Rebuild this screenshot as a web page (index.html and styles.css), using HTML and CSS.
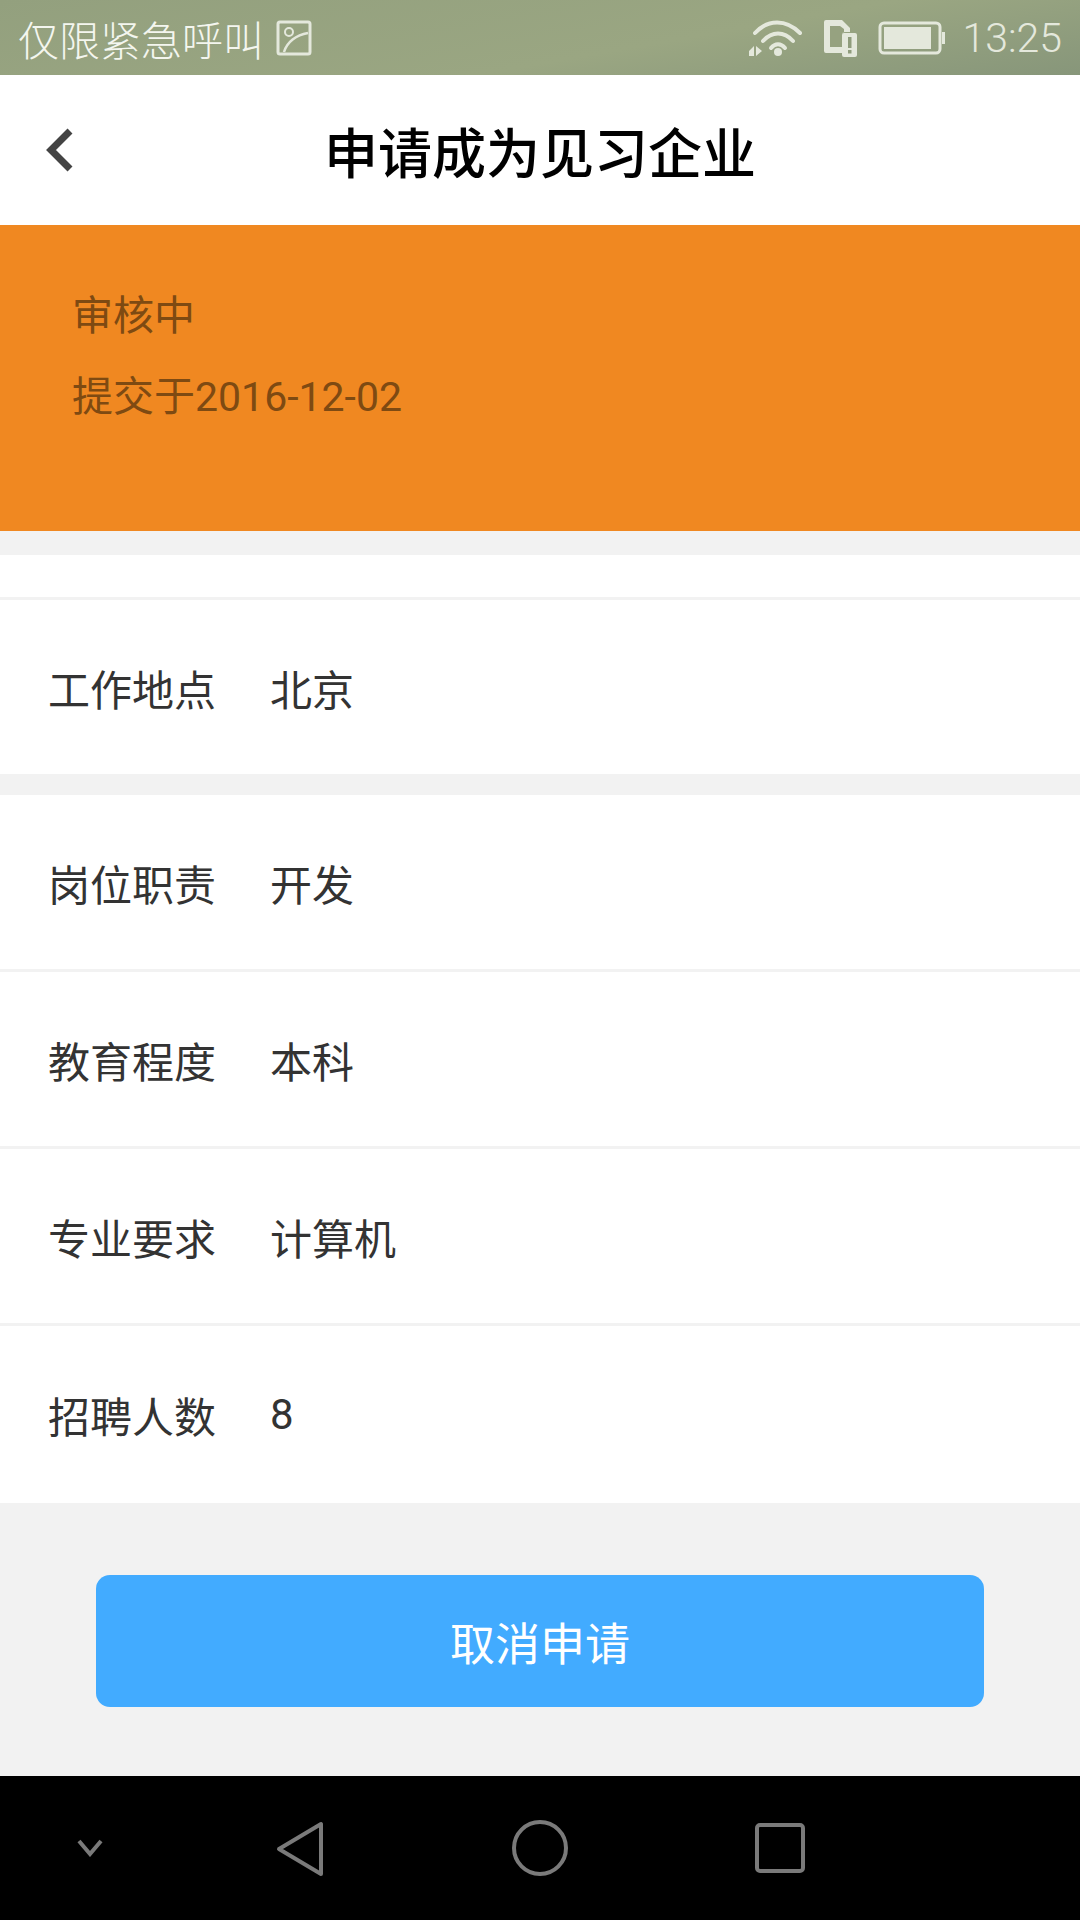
FILE: index.html
```html
<!DOCTYPE html>
<html lang="zh-CN">
<head>
  <meta charset="UTF-8">
  <meta name="viewport" content="width=device-width, initial-scale=1.0">
  <title>申请成为见习企业</title>
  <link rel="stylesheet" href="styles.css">
</head>
<body>
  <div class="phone">
    <div class="status-bar">
      <div class="status-left">
        <span class="carrier">仅限紧急呼叫</span>
        <svg class="pic-icon" width="36" height="36" viewBox="0 0 36 36">
          <rect x="2" y="2" width="32" height="32" rx="2" fill="none" stroke="#e4e8dc" stroke-width="3"/>
          <circle cx="13" cy="12" r="4" fill="none" stroke="#e4e8dc" stroke-width="2"/>
          <path d="M8 32C11 22 20 15 32 13" fill="none" stroke="#e4e8dc" stroke-width="2.5"/>
        </svg>
      </div>
      <div class="status-right">
        <svg class="wifi" width="56" height="38" viewBox="0 0 56 38">
          <path d="M7 14C20 0 38 0 52 14" fill="none" stroke="#e4e8dc" stroke-width="4" stroke-linecap="round"/>
          <path d="M15 22C24 12 36 12 45 22" fill="none" stroke="#e4e8dc" stroke-width="4" stroke-linecap="round"/>
          <path d="M23 29C27 24 33 24 37 29" fill="none" stroke="#e4e8dc" stroke-width="4" stroke-linecap="round"/>
          <circle cx="30" cy="33" r="4" fill="#e4e8dc"/>
          <path d="M1 32L6 27V37H1ZM8 27L14 32L8 37Z" fill="#e4e8dc"/>
        </svg>
        <svg class="sim" width="36" height="38" viewBox="0 0 36 38">
          <path d="M2 3a2 2 0 0 1 2-2H20L28 9V13H23a3 3 0 0 0-3 3V34H4a2 2 0 0 1-2-2Z" fill="#e4e8dc"/>
          <path d="M8 8V28H20V16a3 3 0 0 1 3-3H22V10L18 7H8Z" fill="#96a280"/>
          <rect x="20" y="14" width="15" height="24" rx="2" fill="#e4e8dc"/>
          <rect x="26" y="18" width="3.500" height="11" fill="#8f9c7c"/>
          <rect x="26" y="31" width="3.500" height="3.500" fill="#8f9c7c"/>
        </svg>
        <svg class="battery" width="68" height="34" viewBox="0 0 68 34">
          <rect x="2" y="2" width="60" height="30" rx="4" fill="none" stroke="#e4e8dc" stroke-width="3"/>
          <rect x="6" y="6" width="47" height="22" fill="#e4e8dc"/>
          <rect x="64" y="11" width="3" height="12" fill="#e4e8dc"/>
        </svg>
        <span class="clock">13:25</span>
      </div>
    </div>

    <div class="nav-bar">
      <svg class="nav-back" width="30" height="46" viewBox="0 0 30 46">
        <path d="M26 4L7 23L26 42" fill="none" stroke="#444" stroke-width="7"/>
      </svg>
      <h1 class="nav-title">申请成为见习企业</h1>
    </div>

    <div class="review">
      <div>审核中</div>
      <div class="review-date">提交于2016-12-02</div>
    </div>

    <div class="blank-row"></div>

    <div class="card location">
      <div class="field"><span class="field-label">工作地点</span><span>北京</span></div>
    </div>

    <div class="card">
      <div class="field"><span class="field-label">岗位职责</span><span>开发</span></div>
      <div class="field"><span class="field-label">教育程度</span><span>本科</span></div>
      <div class="field"><span class="field-label">专业要求</span><span>计算机</span></div>
      <div class="field"><span class="field-label">招聘人数</span><span>8</span></div>
    </div>

    <div class="actions">
      <button class="cancel-btn">取消申请</button>
    </div>

    <div class="soft-keys">
      <svg class="key-hide" width="26" height="18" viewBox="0 0 26 18">
        <path d="M2 2L13 15L24 2" fill="none" stroke="#7a7a7a" stroke-width="4"/>
      </svg>
      <svg class="key-back" width="48" height="56" viewBox="0 0 48 56">
        <path d="M45 3V53L3 28Z" fill="none" stroke="#7a7a7a" stroke-width="4" stroke-linejoin="round"/>
      </svg>
      <svg class="key-home" width="56" height="56" viewBox="0 0 56 56">
        <circle cx="28" cy="28" r="26" fill="none" stroke="#7a7a7a" stroke-width="4"/>
      </svg>
      <svg class="key-recent" width="50" height="50" viewBox="0 0 50 50">
        <rect x="2" y="2" width="46" height="46" rx="3" fill="none" stroke="#7a7a7a" stroke-width="4"/>
      </svg>
    </div>
  </div>
</body>
</html>
```

FILE: styles.css
```css
*{
  box-sizing: border-box;
}
body{
  margin: 0;
  font-family: Roboto, "Noto Sans CJK SC", sans-serif;
}
.phone{
  width: 1080px;
  height: 1920px;
  display: flex;
  flex-direction: column;
  background-color: #f2f2f2;
  overflow: hidden;
}
.status-bar{
  height: 75px;
  flex-shrink: 0;
  padding: 0 18px;
  display: flex;
  align-items: center;
  justify-content: space-between;
  color: #f4f6ef;
  background: linear-gradient(170deg, #93a07e 0%, #9aa682 60%, #87967a 100%);
}
.status-left{
  display: flex;
  align-items: center;
}
.carrier{
  font-size: 41px;
  font-weight: 300;
}
.pic-icon{
  margin-left: 12px;
}
.status-right{
  display: flex;
  align-items: center;
}
.wifi{
  margin-right: 18px;
}
.sim{
  margin-right: 20px;
}
.battery{
  margin-right: 16px;
}
.clock{
  font-size: 41px;
  font-weight: 300;
  color: #e4e8dc;
}
.nav-bar{
  position: relative;
  height: 150px;
  flex-shrink: 0;
  display: flex;
  align-items: center;
  justify-content: center;
  background-color: #fff;
}
.nav-back{
  position: absolute;
  left: 44px;
  top: 52px;
}
.nav-title{
  margin: 0;
  font-size: 54px;
  font-weight: 500;
  color: #000;
}
.review{
  height: 306px;
  flex-shrink: 0;
  padding: 62px 0 0 72px;
  font-size: 41px;
  line-height: 58px;
  color: #7e4a12;
  background-color: #f08821;
}
.review-date{
  margin-top: 23px;
}
.blank-row{
  height: 45px;
  margin-top: 24px;
  flex-shrink: 0;
  background-color: #fff;
  border-bottom: 3px solid #f2f2f2;
}
.card{
  flex-shrink: 0;
  background-color: #fff;
}
.location{
  margin-bottom: 21px;
}
.field{
  height: 177px;
  padding-left: 48px;
  display: flex;
  align-items: center;
  font-size: 42px;
  color: #333;
  border-bottom: 3px solid #f2f2f2;
}
.location .field{
  height: 174px;
  border-bottom: 0;
}
.card .field:last-child{
  border-bottom: 0;
}
.field-label{
  width: 222px;
}
.actions{
  flex: 1;
  padding-top: 72px;
  display: flex;
  justify-content: center;
  align-items: flex-start;
}
.cancel-btn{
  width: 888px;
  height: 132px;
  border: 0;
  border-radius: 14px;
  font-family: inherit;
  font-size: 45px;
  color: #fff;
  background-color: #42abff;
}
.soft-keys{
  position: relative;
  height: 144px;
  flex-shrink: 0;
  background-color: #000;
}
.soft-keys svg{
  position: absolute;
}
.key-hide{
  left: 77px;
  top: 63px;
}
.key-back{
  left: 276px;
  top: 45px;
}
.key-home{
  left: 512px;
  top: 44px;
}
.key-recent{
  left: 755px;
  top: 47px;
}
```
